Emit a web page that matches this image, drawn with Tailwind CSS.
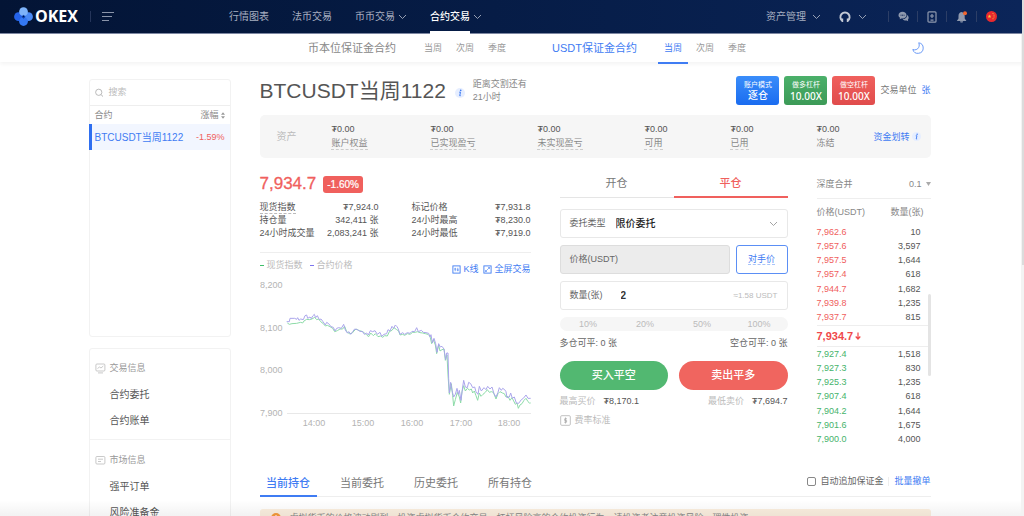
<!DOCTYPE html>
<html lang="zh-CN">
<head>
<meta charset="utf-8">
<title>OKEX 合约交易</title>
<script src="https://cdn.jsdelivr.net/npm/@tailwindcss/browser@4"></script>
</head>
<body class="relative h-screen overflow-hidden bg-white pr-[3px] font-['Liberation_Sans','Noto_Sans_CJK_SC',sans-serif] text-[9px] leading-[13px] text-[#666]">
<svg class="hidden">
  <symbol id="chev" viewBox="0 0 9 6"><path d="M1 1l3.500 3.500L8 1" fill="none" stroke="currentColor" stroke-width="0.900"/></symbol>
  <symbol id="info" viewBox="0 0 10 10"><circle cx="5" cy="5" r="5" fill="#e6eeff"/><circle cx="5.700" cy="2.400" r="0.800" fill="#3f7cf3"/><path d="M4.200 4.200h1.300L4.700 7.700h1" fill="none" stroke="#3f7cf3" stroke-width="1"/></symbol>
</svg>

<header class="-mr-[3px] flex h-[34px] items-center border-b border-[#7e88a3] bg-linear-to-r from-[#031435] to-[#0b2559] pr-[27px] pl-[14px] text-[10px] text-[#a7afc0]">
  <a href="#" class="flex items-center gap-[2px] font-['Open_Sans',sans-serif] text-[16px] font-bold text-white">
    <svg class="size-[19px]" viewBox="0 0 19 19"><circle cx="4.500" cy="9.700" r="4.400" fill="#2463ea"/><circle cx="14.500" cy="9.700" r="4.400" fill="#4a8af5"/><circle cx="9.500" cy="4.700" r="4.400" fill="#7db3fa"/><circle cx="9.500" cy="14.500" r="4.400" fill="#3478f3"/><path d="M9.500 7.700l2 2-2 2-2-2z" fill="#0d3fa8"/><circle cx="9.500" cy="9.500" r="0.600" fill="#031435"/></svg>
    OKEX
  </a>
  <span class="ml-3 h-[11px] w-px bg-[#25355a]"></span>
  <button type="button" aria-label="菜单" class="ml-[11px]"><svg class="h-[9px] w-[12px]" viewBox="0 0 12 9"><path d="M0 .5h12M0 4.500h10M0 8.500h7" stroke="#8a94a9" stroke-width="1"/></svg></button>
  <nav class="ml-[115px] flex h-full items-center gap-[23px]">
    <a href="#">行情图表</a>
    <a href="#">法币交易</a>
    <a href="#" class="flex items-center gap-[3px]">币币交易<svg class="h-[6px] w-[9px]"><use href="#chev"/></svg></a>
    <a href="#" class="relative flex h-full items-center gap-[3px] font-medium text-white">合约交易<svg class="h-[6px] w-[9px] text-[#a7afc0]"><use href="#chev"/></svg><span class="absolute -bottom-px left-0 h-[3px] w-10 bg-white"></span></a>
  </nav>
  <div class="ml-auto flex items-center">
    <a href="#" class="flex items-center gap-[6px]">资产管理<svg class="h-[6px] w-[9px]"><use href="#chev"/></svg></a>
    <button type="button" aria-label="账户" class="ml-[18px] flex items-center gap-[7px]"><svg class="size-[12px]" viewBox="0 0 12 12"><path d="M3.300 9.800A4.600 4.600 0 1 1 8.700 9.800" fill="none" stroke="#c3c9d5" stroke-width="1.900"/><path d="M1.800 7.600h2.400v3.400H2.800zM10.200 7.600H7.800v3.400h1.400z" fill="#c3c9d5"/></svg><svg class="h-[6px] w-[9px]"><use href="#chev"/></svg></button>
    <span class="ml-[21px] h-[11px] w-px bg-[#2c3e66]"></span>
    <button type="button" aria-label="消息" class="ml-[9px]"><svg class="size-[11px]" viewBox="0 0 11 11"><path d="M4.500.8C2.300.8.5 2.300.5 4.200c0 1.100.6 2 1.500 2.600L1.700 8.300l1.600-.9c3 .5 5.200-1.100 5.200-3.200C8.500 2.300 6.700.8 4.500.8z" fill="#8f99ae"/><path d="M9.200 4c0 2.500-2.300 4.200-4.500 4.200 1 1.200 2.600 1.500 4 1.200l1.500.9-.3-1.500C11.200 7.500 10.800 5 9.200 4z" fill="#8f99ae"/><path d="M2.600 4.200h.9M4.100 4.200h.9M5.600 4.200h.9" stroke="#0a2353"/></svg></button>
    <span class="ml-[8px] h-[11px] w-px bg-[#2c3e66]"></span>
    <button type="button" aria-label="下载" class="ml-[9px]"><svg class="h-[12px] w-[10px]" viewBox="0 0 10 12"><rect x="1" y=".8" width="8" height="10.400" rx="1" fill="none" stroke="#8f99ae" stroke-width="1.200"/><path d="M5 3v4M3 5h4M3.500 9.200h3" stroke="#8f99ae" stroke-width="1.200"/></svg></button>
    <span class="ml-[9px] h-[11px] w-px bg-[#2c3e66]"></span>
    <button type="button" aria-label="通知" class="ml-[9px]"><svg class="size-[12px]" viewBox="0 0 12 12"><path d="M5.500 1C3.300 1.400 2.500 3 2.500 5v2.500L.8 10h9.600L8.700 7.500V5c0-2-1-3.600-3.200-4z" fill="#8f99ae"/><path d="M4 10.300h3.200l-.6 1.200h-2z" fill="#8f99ae"/><circle cx="9" cy="2.200" r="2" fill="#f2662f"/></svg></button>
    <span class="ml-[8px] h-[11px] w-px bg-[#2c3e66]"></span>
    <button type="button" aria-label="语言" class="ml-[9px]"><svg class="size-[11px]" viewBox="0 0 11 11"><circle cx="5.500" cy="5.500" r="5.500" fill="#e8292f"/><path d="M3.500 3.500l.5 1.300h1.300l-1 .9.400 1.300-1.200-.8-1.200.8.4-1.300-1-.9H3z" fill="#fbd23c"/><path d="M6.500 2.500h1M7.500 4.200h1M7.500 6h1M6.500 7.700h1" stroke="#fbd23c" stroke-width=".8"/></svg></button>
  </div>
</header>

<nav class="-mr-[3px] flex h-[28px] items-center bg-white pr-[100px] pl-[308px] text-[#999] shadow-[0_2px_4px_rgba(0,0,0,0.05)]">
  <a href="#" class="text-[11px] text-[#888]">币本位保证金合约</a>
  <div class="ml-[28px] flex gap-[14px]"><a href="#">当周</a><a href="#">次周</a><a href="#">季度</a></div>
  <a href="#" class="ml-[46px] text-[11px] text-[#3f7cf3]">USDT保证金合约</a>
  <div class="ml-[21px] flex h-full items-center gap-[14px]"><a href="#" class="relative -mr-[6px] flex h-full items-center px-[6px] text-[#3f7cf3]">当周<span class="absolute inset-x-0 -bottom-[2px] h-[2px] bg-[#3f7cf3]"></span></a><a href="#">次周</a><a href="#">季度</a></div>
  <button type="button" aria-label="夜间模式" class="ml-auto"><svg class="size-[12px]" viewBox="0 0 12 12"><path d="M6.700.8A5.300 5.300 0 1 1 .8 7.500C3 8.400 5.600 7.600 6.700 5.400 7.500 3.800 7.300 2.200 6.700.8z" fill="none" stroke="#5b90f5" stroke-width=".9"/></svg></button>
</nav>

<div class="mx-auto flex max-w-[844px] gap-[29px] pr-[2px]">
  <aside class="w-[142px] shrink-0 pt-[17px]">
    <section class="h-[258px] rounded-[3px] border border-[#f2f2f2]">
      <label class="flex h-[26px] items-center gap-[5px] border-b border-[#eee] px-[5px]">
        <svg class="size-[10px]" viewBox="0 0 10 10"><circle cx="4.200" cy="4.200" r="3.500" fill="none" stroke="#aaa" stroke-width=".9"/><path d="M6.800 6.800l2.700 2.700" stroke="#aaa"/></svg>
        <input type="text" aria-label="搜索" placeholder="搜索" class="w-full min-w-0 outline-none placeholder:text-[#bbb]">
      </label>
      <div class="flex h-[18px] items-center justify-between px-[5px] text-[#888]"><span>合约</span><button type="button" class="flex items-center gap-[2px]">涨幅<svg class="h-[7px] w-[4px]" viewBox="0 0 4 7"><path d="M0 2.700L2 .3l2 2.400zM0 4.300l2 2.400 2-2.400z" fill="#999"/></svg></button></div>
      <a href="#" class="-ml-px flex h-[26px] items-center justify-between border-l-[3px] border-[#2f6ff0] bg-[#f2f6ff] pr-[5px] pl-[3px]"><span class="text-[10px] text-[#3f7cf3]">BTCUSDT当周1122</span><span class="text-[#f0605d]">-1.59%</span></a>
    </section>
    <section class="mt-[11px] rounded-[3px] border border-[#f2f2f2] text-[10px] text-[#555]">
      <div class="flex flex-col gap-[13px] border-b border-[#f2f2f2] pt-[13px] pb-[12px]">
        <h3 class="flex items-center gap-[4px] pl-[5px] text-[9px] text-[#999]"><svg class="size-[11px]" viewBox="0 0 11 11"><rect x=".9" y="1" width="9" height="7" rx="1" fill="none" stroke="#bbb" stroke-width=".8"/><path d="M2.500 5.500l2-1.500 1.500 1 2.300-2M3 9.900h5" fill="none" stroke="#bbb" stroke-width=".8"/></svg>交易信息</h3>
        <a href="#" class="pl-[20px]">合约委托</a>
        <a href="#" class="pl-[20px]">合约账单</a>
      </div>
      <div class="flex flex-col gap-[13px] pt-[14px] pb-[12px]">
        <h3 class="flex items-center gap-[4px] pl-[5px] text-[9px] text-[#999]"><svg class="size-[11px]" viewBox="0 0 11 11"><rect x=".9" y="1.500" width="9" height="7.500" rx="1" fill="none" stroke="#bbb" stroke-width=".8"/><path d="M3 4.200h5M3 6.500h3" stroke="#bbb" stroke-width=".8"/></svg>市场信息</h3>
        <a href="#" class="pl-[20px]">强平订单</a>
        <a href="#" class="pl-[20px]">风险准备金</a>
      </div>
    </section>
  </aside>

  <main class="min-w-0 flex-1 pt-[14px]">
    <div class="flex h-[29px] items-center">
      <h1 class="text-[21px] leading-[29px] text-[#555]">BTCUSDT当周1122</h1>
      <svg class="ml-[9px] mt-[4px] size-[10px]"><use href="#info"/></svg>
      <p class="ml-[8px] text-[#888]">距离交割还有<br>21小时</p>
      <div class="ml-auto flex gap-[5px] text-center text-white">
        <button type="button" class="h-[29px] w-[43px] rounded-[3px] bg-linear-to-b from-[#3a8dfa] to-[#1a6cf0]"><span class="block text-[7px] leading-[10px]">账户模式</span><span class="block text-[10px] leading-[12px] font-medium">逐仓</span></button>
        <button type="button" class="h-[29px] w-[43px] rounded-[3px] bg-linear-to-b from-[#4bb06a] to-[#3c9a57]"><span class="block text-[7px] leading-[10px]">做多杠杆</span><span class="block font-['Noto_Sans',sans-serif] text-[10px] leading-[12px] font-medium">10.00X</span></button>
        <button type="button" class="h-[29px] w-[43px] rounded-[3px] bg-linear-to-b from-[#f0605d] to-[#e04c4c]"><span class="block text-[7px] leading-[10px]">做空杠杆</span><span class="block font-['Noto_Sans',sans-serif] text-[10px] leading-[12px] font-medium">10.00X</span></button>
      </div>
      <span class="ml-[5px] text-[#777]">交易单位</span><a href="#" class="ml-[5px] text-[#3f7cf3]">张</a>
    </div>

    <dl class="mt-[10px] grid h-[43px] grid-cols-[55fr_99fr_107fr_107fr_86fr_86fr_57fr_47fr] items-center rounded-[5px] bg-[#f6f6f6] pr-[10px] pl-[17px] leading-[12px] whitespace-nowrap text-[#888]">
      <div class="text-[10px] text-[#bbb]">资产</div>
      <div class="flex flex-col-reverse items-start gap-[2px]"><dt class="border-b border-dashed border-[#ccc]">账户权益</dt><dd class="text-[#555]">₮0.00</dd></div>
      <div class="flex flex-col-reverse items-start gap-[2px]"><dt class="border-b border-dashed border-[#ccc]">已实现盈亏</dt><dd class="text-[#555]">₮0.00</dd></div>
      <div class="flex flex-col-reverse items-start gap-[2px]"><dt class="border-b border-dashed border-[#ccc]">未实现盈亏</dt><dd class="text-[#555]">₮0.00</dd></div>
      <div class="flex flex-col-reverse items-start gap-[2px]"><dt class="border-b border-dashed border-[#ccc]">可用</dt><dd class="text-[#555]">₮0.00</dd></div>
      <div class="flex flex-col-reverse items-start gap-[2px]"><dt class="border-b border-dashed border-[#ccc]">已用</dt><dd class="text-[#555]">₮0.00</dd></div>
      <div class="flex flex-col-reverse items-start gap-[2px]"><dt class="border-b border-transparent">冻结</dt><dd class="text-[#555]">₮0.00</dd></div>
      <a href="#" class="flex items-center gap-[2px] text-[#3f7cf3]">资金划转<svg class="size-[9px]" viewBox="0 0 10 10"><use href="#info"/></svg></a>
    </dl>

    <div class="mt-[17px] grid h-[292px] grid-cols-[271fr_228fr_114fr] gap-[29px]">
      <section>
        <div class="flex h-[18px] items-center gap-[7px]"><strong class="text-[17px] leading-[18px] font-normal text-[#f0605d] [-webkit-text-stroke:0.3px]">7,934.7</strong><span class="rounded-[3px] bg-[#f0605d] px-[4px] text-[10px] leading-[17px] text-white [-webkit-text-stroke:0.2px]">-1.60%</span></div>
        <div class="mt-[8px] grid grid-cols-[119fr_119fr] gap-x-[33px] border-b border-[#eee] pb-[12px] text-[#555]">
          <p class="flex justify-between"><span class="border-b border-dashed border-[#bbb] leading-[12px]">现货指数</span><span>₮7,924.0</span></p><p class="flex justify-between"><span>标记价格</span><span>₮7,931.8</span></p>
          <p class="flex justify-between"><span>持仓量</span><span>342,411 张</span></p><p class="flex justify-between"><span>24小时最高</span><span>₮8,230.0</span></p>
          <p class="flex justify-between"><span>24小时成交量</span><span>2,083,241 张</span></p><p class="flex justify-between"><span>24小时最低</span><span>₮7,919.0</span></p>
        </div>
        <div class="flex h-[26px] justify-between text-[#bbb]">
          <div class="flex items-center gap-[3px] pb-[2px]"><span class="h-px w-[4px] bg-[#3fbf68]"></span>现货指数<span class="ml-[4px] h-px w-[4px] bg-[#7d74ee]"></span>合约价格</div>
          <div class="flex items-center gap-[5px] pt-[7px] text-[#3f7cf3]">
            <a href="#" class="flex items-center gap-[2px]"><svg class="size-[9px]" viewBox="0 0 9 9"><rect x=".9" y=".9" width="7.200" height="7.200" fill="none" stroke="currentColor" stroke-width=".9"/><path d="M3.200 2.800v3.400M5.800 2.800v3.400M2.200 4h2M4.800 5h2" stroke="currentColor" stroke-width=".7"/></svg>K线</a>
            <a href="#" class="flex items-center gap-[2px]"><svg class="size-[9px]" viewBox="0 0 9 9"><rect x=".9" y=".9" width="7.200" height="7.200" fill="none" stroke="currentColor" stroke-width=".9"/><path d="M5 2.500h1.500v1.500M4 6.500H2.500V5M6.500 2.500l-4 4" fill="none" stroke="currentColor" stroke-width=".6"/></svg>全屏交易</a>
          </div>
        </div>
        <svg class="w-full" viewBox="0 0 271 154" role="img" aria-label="价格走势">
          <g fill="#b3b3b3" font-size="9"><text x="0" y="9">8,200</text><text x="0" y="52">8,100</text><text x="0" y="94">8,000</text><text x="0" y="137">7,900</text>
          <g text-anchor="middle"><text x="54" y="147">14:00</text><text x="103" y="147">15:00</text><text x="152" y="147">16:00</text><text x="201" y="147">17:00</text><text x="249" y="147">18:00</text></g></g>
          <path d="M27 134.500H271" stroke="#e8e8e8"/>
          <g transform="translate(-10 -4) scale(0.33333)" fill="none" stroke-width="3" stroke-linejoin="round">
            <polyline stroke="#8ddba8" points="112,144 118,148 126,146 140,145 152,142 158,144 162,138 170,133 178,134 186,132 194,127 200,134 206,132 212,140 220,146 226,153 232,151 240,155 248,160 254,170 262,167 270,162 278,162 284,154 290,170 298,176 306,175 312,168 318,162 328,167 336,169 344,174 350,180 356,185 362,174 370,182 376,176 384,185 392,183 398,187 404,182 412,183 418,170 426,166 432,158 440,164 446,168 450,180 458,178 464,181 472,176 480,178 488,172 496,172 502,170 510,173 518,174 526,176 534,178 540,184 545,206 550,194 556,210 560,236 566,210 570,228 576,224 582,222 586,256 591,240 594,300 598,358 604,326 608,362 611,393 616,374 622,352 628,366 632,384 636,350 641,332 646,348 652,340 658,345 664,342 668,354 673,348 678,362 683,376 688,354 693,364 699,358 706,352 712,344 718,352 724,350 730,352 738,372 744,356 750,350 757,354 763,356 768,366 774,364 780,376 786,368 791,378 796,388 801,384 805,400 810,390 816,386 822,376 828,370 834,380 838,384 842,384"/>
            <polyline stroke="#aaa5eb" points="110,140 118,140 120,130 134,130 140,133 143,128 147,136 152,132 160,134 165,122 170,120 173,130 180,126 184,131 188,123 193,118 197,128 202,122 208,134 213,132 219,140 226,150 230,142 236,146 243,155 250,157 255,168 260,160 266,158 274,160 281,148 286,165 292,174 297,170 302,178 308,170 314,162 322,164 330,169 338,170 343,178 350,174 355,180 361,167 368,170 375,167 382,178 390,172 395,184 402,178 410,176 414,164 420,168 426,154 431,160 436,150 441,155 444,160 450,178 458,173 464,178 472,173 480,175 486,169 494,170 500,158 505,170 514,166 520,172 528,173 536,175 540,186 543,179 547,204 552,190 557,206 561,232 566,206 571,216 576,214 582,222 587,254 590,234 594,234 596,310 598,354 602,322 606,346 611,366 616,358 621,340 625,358 628,346 633,376 638,336 641,316 646,336 652,338 656,322 662,326 668,338 674,336 678,350 684,358 688,334 694,348 702,338 708,344 713,334 720,342 726,336 732,356 738,366 744,352 748,338 754,346 758,340 764,344 768,350 771,368 778,366 782,354 787,370 793,366 799,384 806,385 814,374 820,370 828,360 834,370 842,370"/>
          </g>
        </svg>
      </section>

      <form class="flex flex-col" onsubmit="return false">
        <div class="grid h-[23px] grid-cols-2 text-[11px]">
          <button type="button" class="border-b border-[#e5e5e5] pb-[5px] text-[#777]">开仓</button>
          <button type="button" class="border-b-2 border-[#f0605d] pb-[4px] font-medium text-[#f0605d]">平仓</button>
        </div>
        <div class="relative mt-[11px] flex h-[29px] items-center rounded-[3px] border border-[#e8e8e8] px-[9px]">
          <label for="type" class="w-[46px]">委托类型</label>
          <select id="type" class="h-full flex-1 appearance-none bg-transparent text-[10px] font-medium text-[#222] outline-none"><option>限价委托</option></select>
          <svg class="h-[6px] w-[9px] text-[#999]"><use href="#chev"/></svg>
        </div>
        <div class="mt-[7px] flex h-[29px] gap-[6px]">
          <div class="flex flex-1 items-center rounded-[3px] border border-[#ddd] bg-[#ececec] px-[9px]"><label for="price">价格(USDT)</label><input id="price" type="text" disabled class="min-w-0 flex-1"></div>
          <button type="button" class="w-[52px] rounded-[3px] border border-[#5b8ff5] text-[#3f7cf3]"><span class="border-b border-dashed border-[#a9c4fa]">对手价</span></button>
        </div>
        <div class="mt-[7px] flex h-[29px] items-center rounded-[3px] border border-[#e8e8e8] px-[9px]">
          <label for="qty" class="w-[51px]">数量(张)</label>
          <input id="qty" type="text" value="2" class="min-w-0 flex-1 text-[10px] font-bold text-[#333] outline-none">
          <span class="text-[8px] text-[#bbb]">≈1.58 USDT</span>
        </div>
        <div class="mt-[7px] grid h-[14px] grid-cols-4 rounded-full bg-[#f6f6f6] text-[#bbb]"><button type="button">10%</button><button type="button">20%</button><button type="button">50%</button><button type="button">100%</button></div>
        <div class="mt-[6px] flex justify-between"><span>多仓可平: 0 张</span><span>空仓可平: 0 张</span></div>
        <div class="mt-[11px] grid h-[29px] grid-cols-2 gap-[11px] text-[11px] font-medium text-white"><button type="button" class="rounded-full bg-[#52b871]">买入平空</button><button type="button" class="rounded-full bg-[#f0655f]">卖出平多</button></div>
        <div class="mt-[5px] flex justify-between text-[#bbb]"><span>最高买价<span class="ml-[8px] text-[#555]">₮8,170.1</span></span><span>最低卖价<span class="ml-[8px] text-[#555]">₮7,694.7</span></span></div>
        <a href="#" class="mt-[6px] flex items-center gap-[4px] text-[#bbb]"><svg class="size-[11px]" viewBox="0 0 11 11"><rect x=".7" y=".7" width="9.600" height="9.600" rx="1" fill="none" stroke="#bbb" stroke-width=".9"/><path d="M7 3.800H4.700v1.700h1.900v1.700H4.200M5.500 2.500v6" fill="none" stroke="#aaa" stroke-width=".8"/></svg>费率标准</a>
      </form>

      <section class="relative">
        <div class="flex h-[24px] items-center justify-between border-b border-[#eee] pb-[5px] text-[#888]"><span>深度合并</span><button type="button" class="flex items-center gap-[4px]">0.1<svg class="h-[4px] w-[5px]" viewBox="0 0 5 4"><path d="M0 0h5L2.500 4z" fill="#aaa"/></svg></button></div>
        <table class="h-[126px] w-full">
          <thead class="text-[#888]"><tr class="h-[26px]"><th class="text-left font-normal">价格(USDT)</th><th class="pr-[7px] text-right font-normal">数量(张)</th></tr></thead>
          <tbody class="text-[#f0605d]" id="asks"></tbody>
        </table>
        <div class="mr-[3px] flex h-[22px] items-center gap-[2px] border-y border-[#eee] text-[11px] font-bold text-[#f0484a]">7,934.7<svg class="h-[8px] w-[6px]" viewBox="0 0 6 8"><path d="M3 .5v6.500M.7 4.500L3 7l2.300-2.500" fill="none" stroke="currentColor" stroke-width="1.200"/></svg></div>
        <table class="h-[100px] w-full"><tbody class="text-[#45b36b]" id="bids"></tbody></table>
        <span class="absolute top-[119px] right-0 h-[82px] w-[3px] rounded-full bg-[#e4e4e4]"></span>
      </section>
    </div>

    <div class="flex h-[30px] justify-between border-b border-[#eee]">
      <div class="flex gap-[17px] text-[11px] text-[#777]">
        <button type="button" class="-mb-px w-[57px] border-b-2 border-[#3f7cf3] pt-[5px] font-medium text-[#3f7cf3]">当前持仓</button><button type="button" class="w-[57px] pt-[4px]">当前委托</button><button type="button" class="w-[57px] pt-[4px]">历史委托</button><button type="button" class="w-[57px] pt-[4px]">所有持仓</button>
      </div>
      <div class="flex items-center"><label class="flex items-center gap-[4px]"><input type="checkbox" class="size-[9px] appearance-none rounded-[2px] border border-[#888] bg-white">自动追加保证金</label><span class="mx-[5px] h-[9px] w-px bg-[#eee]"></span><a href="#" class="text-[#3f7cf3]">批量撤单</a></div>
    </div>
    <div class="mt-[12px] flex h-[28px] items-start gap-[9px] rounded-[3px] bg-[#fbefdf] px-[11px] pt-[3px] text-[#888]"><svg class="mt-px size-[10px]" viewBox="0 0 10 10"><circle cx="5" cy="5" r="5" fill="#f59a3c"/><path d="M5 2v4M5 7v1" stroke="#fff"/></svg><span>虚拟货币的价格波动剧烈，投资虚拟货币合约交易，杠杆风险高的合约投资行为，请投资者注意投资风险，理性投资</span></div>
  </main>
</div>

<div class="pointer-events-none absolute inset-x-0 bottom-0 h-[16px] bg-linear-to-b from-black/0 to-black/5"></div>
<div class="absolute top-[34px] right-0 bottom-0 w-[3px] bg-[#f3f3f3]"></div>
<div class="absolute top-0 right-0 h-[265px] w-[2px] bg-[#dcdcdc]"></div>

<script>
  const row = ([p, q]) => `<tr><td>${p}</td><td class="pr-[10px] text-right text-[#555]">${q}</td></tr>`;
  const asks = [['7,962.6','10'],['7,957.6','3,597'],['7,957.5','1,644'],['7,957.4','618'],['7,944.7','1,682'],['7,939.8','1,235'],['7,937.7','815']];
  const bids = [['7,927.4','1,518'],['7,927.3','830'],['7,925.3','1,235'],['7,907.4','618'],['7,904.2','1,644'],['7,901.6','1,675'],['7,900.0','4,000']];
  document.getElementById('asks').innerHTML = asks.map(row).join('');
  document.getElementById('bids').innerHTML = bids.map(row).join('');
</script>
</body>
</html>
